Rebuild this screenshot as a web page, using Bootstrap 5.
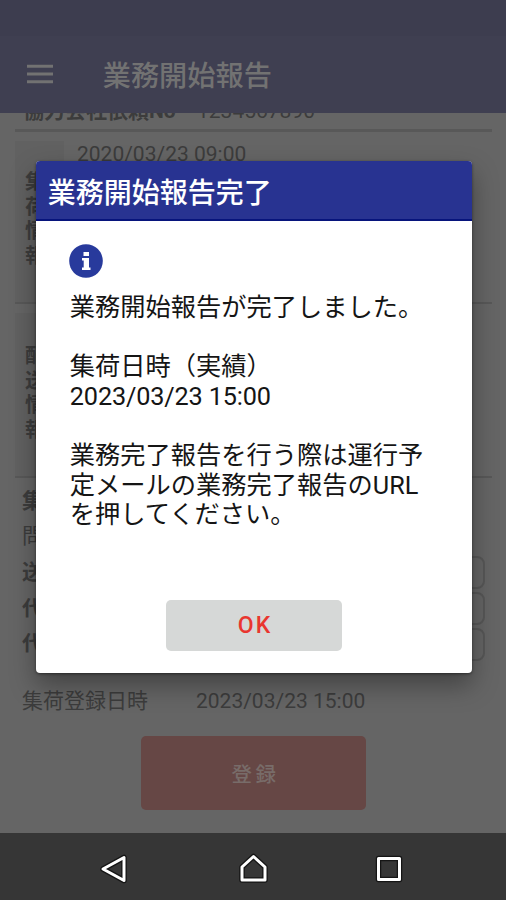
<!DOCTYPE html>
<html lang="ja">
<head>
<meta charset="utf-8">
<meta name="viewport" content="width=device-width, initial-scale=1">
<title>業務開始報告</title>
<link href="https://cdn.jsdelivr.net/npm/bootstrap@5.3.0/dist/css/bootstrap.min.css" rel="stylesheet">
<style>
body{font-family:Roboto,"Noto Sans CJK JP",sans-serif;background:#656565;color:#3c3c3c;font-size:21px}
.phone{width:506px;height:900px}
.statusbar{height:36px;background:#3d3d4f}
.appbar{height:77px;background:#3f3f51;color:#727272;padding-left:27px;gap:49.7px}
.appbar svg{margin-top:-2px}
.appbar-title{font-size:28.2px;font-weight:500;line-height:1;padding-top:5px}
.report{padding:0 14px 0 15px;min-height:0}
.cut-row{height:19px;padding-left:8px;border-bottom:3px solid #585858}
.cut-row>div{line-height:30px;margin-top:-17px;white-space:nowrap}
.cut-label{width:174px;font-size:21px}
.info-block{border-bottom:2px solid #585858}
.pickup{height:172px}
.delivery{height:174px}
.side-label{width:49px;margin-top:9px;padding-left:10px;background:#616161;font-size:20.5px;line-height:24.7px;font-weight:700}
.side-label span{width:21px}
.pickup .side-label{padding-top:29px}
.delivery .side-label{padding-top:31px}
.pickup-time{padding:8px 0 0 13px;line-height:28px}
.line-row{height:35.7px;padding:0 7px;line-height:35.7px}
.first-row{margin-top:5.5px}
.entry{width:120px;height:33px;border:2px solid #575757;border-radius:8px}
.registered{height:36px;margin-top:21px;padding-left:7px;line-height:36px}
.registered-label{width:174px}
.btn-register{width:225px;height:74px;margin-top:17.5px;background:#664745;color:#786c69;border-radius:5px;font-size:20.5px;font-weight:500;letter-spacing:3.5px}
.btn-register span{padding:3px 0 0 4px}
.sysnav{height:67px;background:#363636}
.dialog-box{left:36px;top:161px;width:436px;height:512px;border-radius:4px;box-shadow:0 12px 26px rgba(0,0,0,.35),0 1px 3px rgba(0,0,0,.45)}
.dialog-head{height:60px;background:#283391;border-bottom:2px solid #07147c;padding:7px 0 0 11.7px;font-size:28px;font-weight:500;line-height:1}
.dialog-main{padding:23px 33px 22px}
.message{font-size:25.25px;line-height:29.6px;color:#151515;margin:15px 0 0 .8px}
.message-date{letter-spacing:-.15px}
.btn-ok{width:176px;height:51px;background:#d6d8d7;color:#e9362f;border-radius:5px;font-size:23px;font-weight:500;letter-spacing:2px}
.btn-ok span{padding:2px 0 0 2px}
</style>
<script src="https://cdn.jsdelivr.net/npm/bootstrap@5.3.0/dist/js/bootstrap.bundle.min.js"></script>
</head>
<body>
<div class="phone d-flex flex-column position-relative overflow-hidden">
  <div class="statusbar flex-shrink-0"></div>
  <header class="appbar d-flex align-items-center flex-shrink-0">
    <svg width="26" height="20" viewBox="0 0 26 20" fill="none" stroke="#727272" stroke-width="3"><path d="M0 2.2h26M0 10h26M0 17.8h26"/></svg>
    <div class="appbar-title">業務開始報告</div>
  </header>

  <main class="report flex-grow-1 d-flex flex-column">
    <div class="cut-row d-flex overflow-hidden flex-shrink-0">
      <div class="cut-label fw-bold">協力会社依頼No</div><div>1234567890</div>
    </div>
    <section class="info-block pickup d-flex flex-shrink-0">
      <div class="side-label"><span class="d-block">集荷情報</span></div>
      <div class="pickup-time">2020/03/23 09:00</div>
    </section>
    <section class="info-block delivery d-flex flex-shrink-0">
      <div class="side-label"><span class="d-block">配送情報</span></div>
    </section>
    <div class="line-row first-row fw-bold">集</div>
    <div class="line-row">問</div>
    <div class="line-row d-flex justify-content-between align-items-center fw-bold"><span>送</span><span class="entry"></span></div>
    <div class="line-row d-flex justify-content-between align-items-center fw-bold"><span>代</span><span class="entry"></span></div>
    <div class="line-row d-flex justify-content-between align-items-center fw-bold"><span>代</span><span class="entry"></span></div>
    <div class="registered d-flex flex-shrink-0"><div class="registered-label">集荷登録日時</div><div>2023/03/23 15:00</div></div>
    <button type="button" class="btn btn-register border-0 mx-auto p-0 flex-shrink-0"><span class="d-block">登録</span></button>
  </main>

  <nav class="sysnav d-flex justify-content-center align-items-center flex-shrink-0">
    <svg width="330" height="44" viewBox="0 0 330 44" fill="none" stroke-linejoin="round">
      <g stroke="#151515" stroke-width="5.5"><path d="M15 24 36 12.5V35.5Z"/><path d="M154 35V22L165.500 11.500 177 22V35Z"/><path d="M290.500 13.500H311.500V34.500H290.500Z"/></g>
      <g stroke="#fff" stroke-width="3"><path d="M15 24 36 12.500V35.500Z"/><path d="M154 35V22L165.500 11.500 177 22V35Z"/><path d="M290.500 13.500H311.500V34.500H290.500Z"/></g>
    </svg>
  </nav>

  <div class="dialog-box position-absolute bg-white overflow-hidden d-flex flex-column" role="dialog">
    <div class="dialog-head d-flex align-items-center text-white flex-shrink-0">業務開始報告完了</div>
    <div class="dialog-main d-flex flex-column flex-grow-1">
      <svg width="34" height="34" viewBox="0 0 34 34"><circle cx="17" cy="17" r="16.800" fill="#283a9c"/><path fill="#fff" d="M14.500 8h5.500v4h-5.500zM13 14h7v9.500h1.500V26H13v-2.500h1.700v-7H13z"/></svg>
      <div class="message">業務開始報告が完了しました。<br><br>集荷日時（実績）<br><span class="message-date">2023/03/23 15:00</span><br><br>業務完了報告を行う際は運行予<br>定メールの業務完了報告のURL<br>を押してください。</div>
      <button type="button" class="btn btn-ok border-0 mt-auto mx-auto p-0"><span class="d-block">OK</span></button>
    </div>
  </div>
</div>
</body>
</html>
